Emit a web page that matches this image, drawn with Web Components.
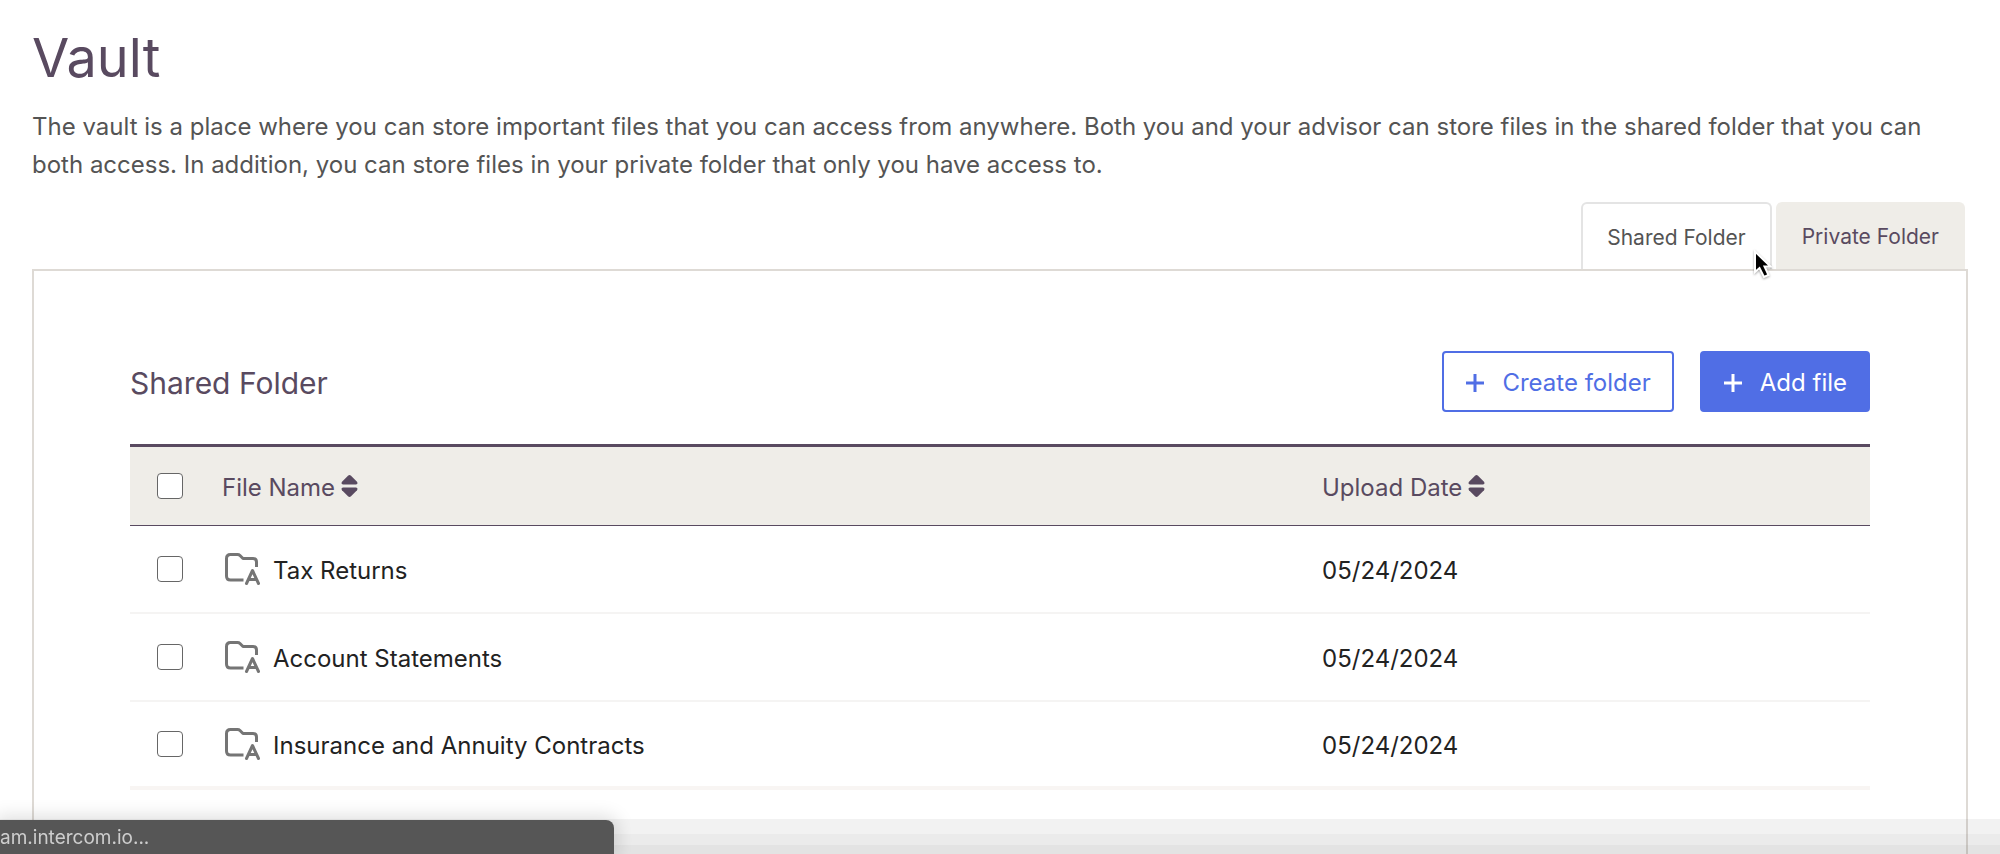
<!DOCTYPE html>
<html lang="en">
<head>
<meta charset="UTF-8">
<meta name="viewport" content="width=device-width, initial-scale=1.0">
<title>Vault</title>
<style>
    :root {
        --plum: #594a60;
        --grey-text: #545454;
        --sand: #efede8;
        --panel-line: #dedad5;
        --blue: #506ee5;
    }
    body {
        margin: 0;
        background: #fff;
        color: var(--grey-text);
        font: 24px/38px Inter, "Liberation Sans", sans-serif;
    }
</style>
</head>
<body>
<vault-page>
    <span slot="title">Vault</span>
    <span slot="intro">The vault is a place where you can store important files that you can access from anywhere. Both you and your advisor can store files in the shared folder that you can both access. In addition, you can store files in your private folder that only you have access to.</span>
    <vault-tab slot="tabs" selected>Shared Folder</vault-tab>
    <vault-tab slot="tabs">Private Folder</vault-tab>
    <span slot="folder">Shared Folder</span>
    <plus-button slot="actions">Create folder</plus-button>
    <plus-button slot="actions" primary>Add file</plus-button>
    <file-table></file-table>
</vault-page>
<status-bar>am.intercom.io...</status-bar>
<mouse-pointer></mouse-pointer>

<script>
// ** <vault-page> : heading, intro, tabs and the bordered panel **
class VaultPage extends HTMLElement {
    constructor() {
        super();
        this.attachShadow({ mode: 'open' });
        this.shadowRoot.innerHTML = `
            <style>
                :host {
                    display: flex;
                    flex-direction: column;
                    box-sizing: border-box;
                    height: 100vh;
                    padding: 26px 32px 0;
                    overflow: hidden;
                }
                h1, h2, p { margin: 0; font-weight: 400; }
                h1 {
                    color: var(--plum);
                    font-size: 54px;
                    line-height: 64px;
                }
                p { margin-top: 18px; }
                nav {
                    display: flex;
                    justify-content: flex-end;
                    gap: 4px;
                    margin-top: 18px;
                    padding-right: 3px;
                }
                main {
                    flex: 1 0 auto;
                    border: 2px solid var(--panel-line);
                    border-bottom: 0;
                    padding: 80px 96px 64px;
                }
                header {
                    display: flex;
                    align-items: center;
                    justify-content: space-between;
                    margin-bottom: 32px;
                }
                h2 {
                    padding-top: 2px;
                    color: var(--plum);
                    font-size: 30px;
                }
                .actions { display: flex; gap: 26px; }
            </style>
            <h1><slot name="title"></slot></h1>
            <p><slot name="intro"></slot></p>
            <nav><slot name="tabs"></slot></nav>
            <main>
                <header>
                    <h2><slot name="folder"></slot></h2>
                    <div class="actions"><slot name="actions"></slot></div>
                </header>
                <slot></slot>
            </main>
        `;
    }
}
customElements.define('vault-page', VaultPage);

// ** <vault-tab> **
class VaultTab extends HTMLElement {
    constructor() {
        super();
        this.attachShadow({ mode: 'open' });
        this.shadowRoot.innerHTML = `
            <style>
                :host { display: block; }
                button {
                    display: block;
                    height: 67px;
                    padding: 0 24px;
                    border: 2px solid var(--sand);
                    border-bottom: 0;
                    border-radius: 6px 6px 0 0;
                    background: var(--sand);
                    color: var(--plum);
                    font: inherit;
                    font-size: 21px;
                    cursor: pointer;
                }
                /* the open tab covers the panel's top line */
                :host([selected]) button {
                    height: 69px;
                    margin-bottom: -2px;
                    border-color: #e4e4e4;
                    background: #fff;
                    color: var(--grey-text);
                }
            </style>
            <button type="button"><slot></slot></button>
        `;
    }
}
customElements.define('vault-tab', VaultTab);

// ** <plus-button> **
class PlusButton extends HTMLElement {
    constructor() {
        super();
        this.attachShadow({ mode: 'open' });
        this.shadowRoot.innerHTML = `
            <style>
                :host { display: block; }
                button {
                    display: flex;
                    align-items: center;
                    gap: 18px;
                    height: 61px;
                    padding: 2px 21px 0 22px;
                    border: 2px solid var(--blue);
                    border-radius: 4px;
                    background: #fff;
                    color: var(--blue);
                    font: inherit;
                    cursor: pointer;
                }
                :host([primary]) button {
                    background: var(--blue);
                    color: #fff;
                }
            </style>
            <button type="button">
                <svg width="18" height="18" viewBox="0 0 18 18" fill="none" stroke="currentColor" stroke-width="3" aria-hidden="true">
                    <path d="M9 0v18M0 9h18"/>
                </svg>
                <span><slot></slot></span>
            </button>
        `;
    }
}
customElements.define('plus-button', PlusButton);

// ** <file-table> **
const FILES = [
    { name: 'Tax Returns', date: '05/24/2024' },
    { name: 'Account Statements', date: '05/24/2024' },
    { name: 'Insurance and Annuity Contracts', date: '05/24/2024' }
];

const sortIcon = `
    <svg width="17" height="22" viewBox="0 0 17 22" fill="currentColor" aria-hidden="true">
        <path d="M7 .8Q8.500-.6 10 .8L16 6.800Q17.300 9.200 15 9.500H2Q-.3 9.200 1 6.800Z"/>
        <path d="M7 21.200Q8.500 22.600 10 21.200L16 15.200Q17.300 12.800 15 12.500H2Q-.3 12.800 1 15.200Z"/>
    </svg>`;

const folderIcon = `
    <svg width="35" height="32" viewBox="0 0 35 32" fill="none" stroke="#757575" stroke-width="3" stroke-linejoin="round" aria-hidden="true">
        <path d="M18.500 27H5.500Q1.500 27 1.500 23V5.500Q1.500 1.500 5.500 1.500H12.500Q14 1.500 15 2.500L18 5.500H28Q31.500 5.500 31.500 9V14"/>
        <path d="M21.500 30.500L27.500 17.500L33.500 30.500M23.500 26.500H31.500" stroke-linecap="round"/>
    </svg>`;

class FileTable extends HTMLElement {
    constructor() {
        super();
        this.attachShadow({ mode: 'open' });
    }

    connectedCallback() {
        const rows = FILES.map(file => `
            <tr>
                <td class="check"><input type="checkbox" aria-label="Select ${file.name}"></td>
                <td><a href="#">${folderIcon}<span>${file.name}</span></a></td>
                <td class="date"><span>${file.date}</span></td>
            </tr>`).join('');

        this.shadowRoot.innerHTML = `
            <style>
                :host { display: block; }
                table {
                    width: 100%;
                    border-collapse: separate;
                    border-spacing: 0;
                    table-layout: fixed;
                }
                th, td {
                    box-sizing: border-box;
                    height: 88px;
                    padding: 0;
                    text-align: left;
                    font-weight: 400;
                    vertical-align: middle;
                }
                th {
                    height: 82px;
                    border-top: 3px solid var(--plum);
                    border-bottom: 1px solid var(--plum);
                    background: var(--sand);
                    color: var(--plum);
                }
                td {
                    border-bottom: 2px solid #f5f4f3;
                    color: #222;
                }
                tr:last-child td { border-bottom: 4px solid #f8f5f3; }
                .check { width: 92px; }
                .date { width: 548px; }
                span {
                    display: block;
                    padding-top: 3px;
                }
                th button {
                    display: flex;
                    align-items: center;
                    gap: 6px;
                    padding: 0;
                    border: 0;
                    background: none;
                    color: inherit;
                    font: inherit;
                    cursor: pointer;
                }
                input {
                    display: block;
                    appearance: none;
                    box-sizing: border-box;
                    width: 26px;
                    height: 26px;
                    margin: 0 0 0 27px;
                    border: 1px solid #666;
                    border-radius: 4px;
                    background: #fff;
                }
                input:checked { background: var(--blue); }
                a {
                    display: flex;
                    align-items: center;
                    gap: 13px;
                    padding-left: 3px;
                    color: inherit;
                    text-decoration: none;
                }
            </style>
            <table>
                <thead>
                    <tr>
                        <th class="check"><input type="checkbox" aria-label="Select all files"></th>
                        <th><button type="button"><span>File Name</span>${sortIcon}</button></th>
                        <th class="date"><button type="button"><span>Upload Date</span>${sortIcon}</button></th>
                    </tr>
                </thead>
                <tbody>${rows}</tbody>
            </table>
        `;
    }
}
customElements.define('file-table', FileTable);

// ** <status-bar> : link address at the foot of the window **
class StatusBar extends HTMLElement {
    constructor() {
        super();
        this.attachShadow({ mode: 'open' });
        this.shadowRoot.innerHTML = `
            <style>
                :host {
                    position: fixed;
                    left: 0;
                    right: 0;
                    bottom: 0;
                    height: 35px;
                    background: linear-gradient(rgba(0,0,0,.05) 0 15px, rgba(0,0,0,.08) 15px 26px, rgba(0,0,0,.11) 26px);
                    pointer-events: none;
                }
                div {
                    box-sizing: border-box;
                    width: 614px;
                    height: 34px;
                    margin-top: 1px;
                    border-radius: 0 8px 0 0;
                    background: #565656;
                    box-shadow: 0 0 18px 4px rgba(0,0,0,.13);
                    color: #cdcdcd;
                    font-size: 19px;
                    line-height: 36px;
                }
            </style>
            <div><slot></slot></div>
        `;
    }
}
customElements.define('status-bar', StatusBar);

// ** <mouse-pointer> **
class MousePointer extends HTMLElement {
    constructor() {
        super();
        this.attachShadow({ mode: 'open' });
        this.shadowRoot.innerHTML = `
            <style>
                :host {
                    position: absolute;
                    top: 249px;
                    right: 227px;
                    pointer-events: none;
                }
                svg {
                    display: block;
                    filter: drop-shadow(0 1px 1px rgba(0,0,0,.35));
                }
            </style>
            <svg width="20" height="30" viewBox="0 0 20 30" aria-hidden="true">
                <path d="M2 2.500V23L6.500 19L11 28L15.500 26L11.500 17.500H17.500Z" fill="#000" stroke="#fff" stroke-width="2"/>
            </svg>
        `;
    }
}
customElements.define('mouse-pointer', MousePointer);
</script>
</body>
</html>
